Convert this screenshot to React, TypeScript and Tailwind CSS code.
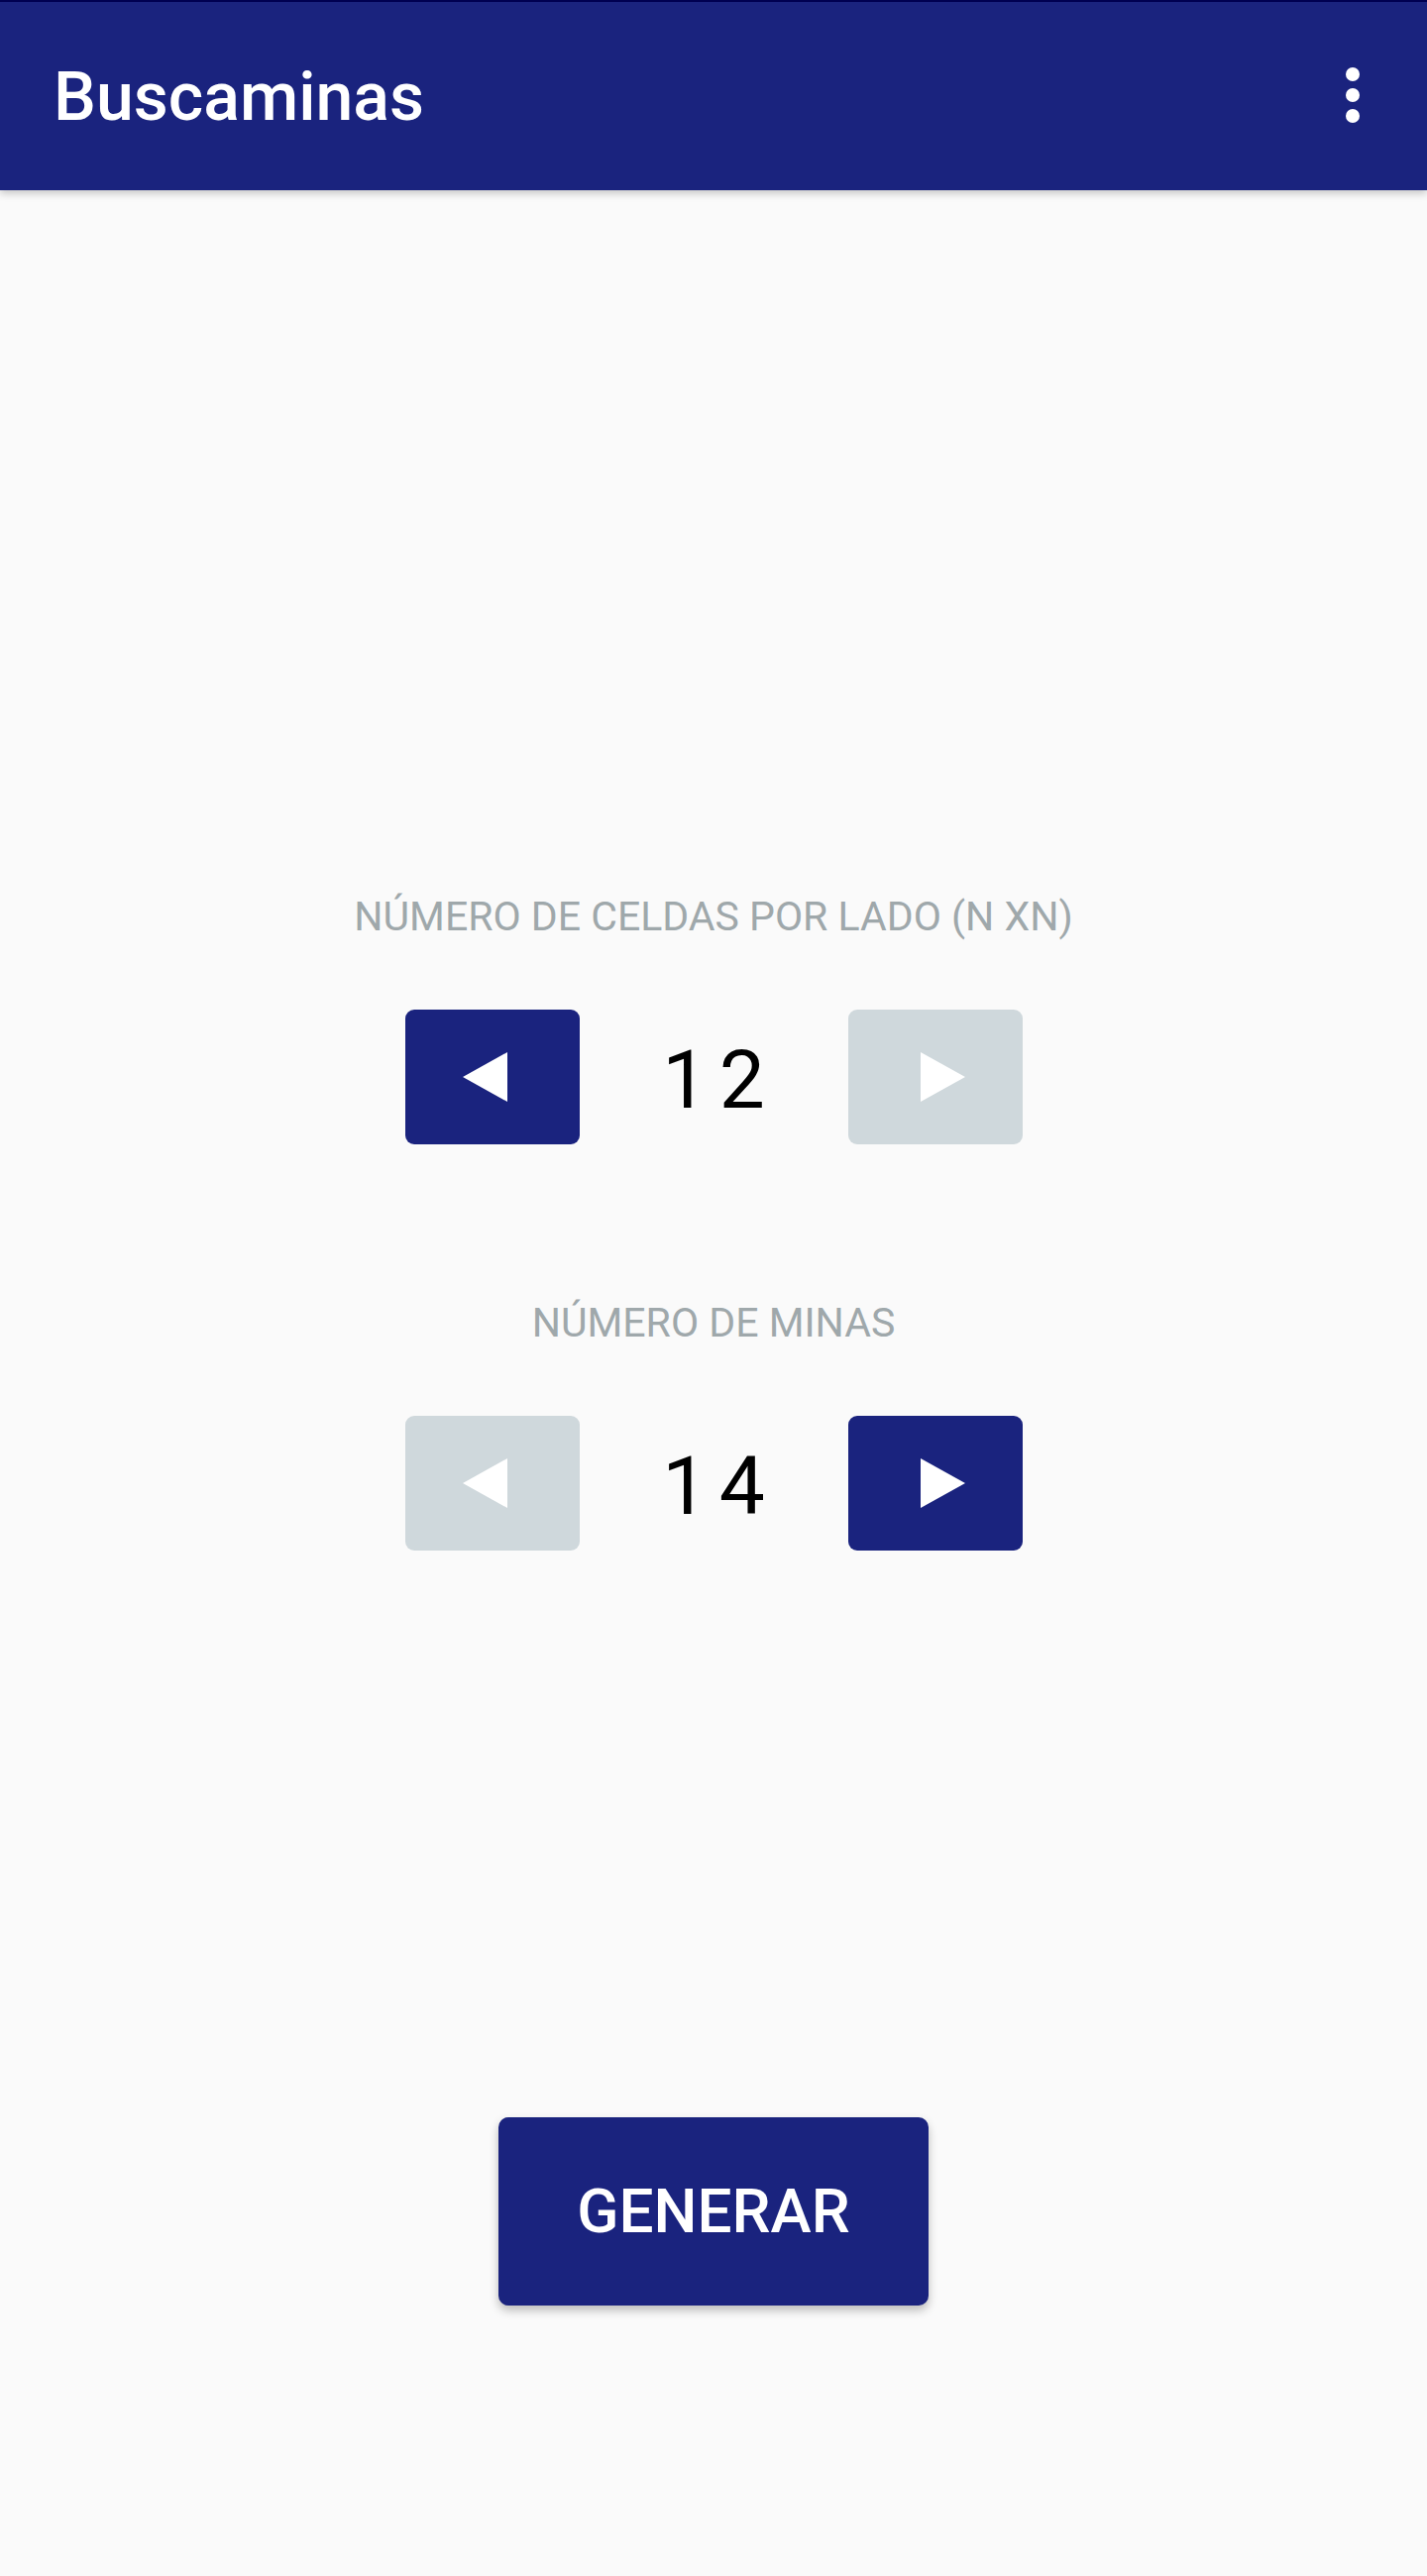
import React from "react";

function Arrow({ dir }: { dir: "left" | "right" }) {
  return (
    <svg width="45" height="50" viewBox="0 0 45 50" className={dir === "left" ? "mr-[15px]" : "ml-[15px]"}>
      {dir === "left" ? (
        <polygon points="45,0 0,25 45,50" fill="#ffffff" />
      ) : (
        <polygon points="0,0 45,25 0,50" fill="#ffffff" />
      )}
    </svg>
  );
}

function Stepper({ value, leftEnabled, rightEnabled }: { value: string; leftEnabled: boolean; rightEnabled: boolean }) {
  return (
    <div className="flex flex-row items-center justify-center">
      <div
        className={
          "w-[176px] h-[136px] rounded-[9px] flex items-center justify-center " +
          (leftEnabled ? "bg-[#1a237e]" : "bg-[#cfd8dc]")
        }
      >
        <Arrow dir="left" />
      </div>
      <div className="w-[271px] flex items-center justify-center pt-[5px]">
        <span className="text-[82px] leading-[82px] tracking-[0.14em] pl-[0.14em] text-black">{value}</span>
      </div>
      <div
        className={
          "w-[176px] h-[136px] rounded-[9px] flex items-center justify-center " +
          (rightEnabled ? "bg-[#1a237e]" : "bg-[#cfd8dc]")
        }
      >
        <Arrow dir="right" />
      </div>
    </div>
  );
}

export default function App() {
  return (
    <div
      className="w-[1440px] h-[2600px] bg-[#fafafa] flex flex-col"
      style={{ fontFamily: "Roboto, 'Noto Sans', sans-serif" }}
    >
      <div className="relative z-10 shadow-[0_3px_8px_rgba(0,0,0,0.22)]">
        <div className="h-[2px] bg-[#000051]" />
        <div className="h-[190px] bg-[#1a237e] flex flex-row items-center justify-between pl-[54px] pr-[68px]">
          <span className="text-white text-[68px] font-medium leading-[82px] pt-[1px]">Buscaminas</span>
          <div className="flex flex-col items-center gap-[7px] pb-[2px]">
            <div className="w-[14px] h-[14px] rounded-full bg-white" />
            <div className="w-[14px] h-[14px] rounded-full bg-white" />
            <div className="w-[14px] h-[14px] rounded-full bg-white" />
          </div>
        </div>
      </div>

      <div className="flex flex-col items-center mt-[709px]">
        <div className="text-[41px] leading-[48px] text-[#9fa8ab] text-center">
          NÚMERO DE CELDAS POR LADO (N XN)
        </div>
        <div className="mt-[70px]">
          <Stepper value="12" leftEnabled={true} rightEnabled={false} />
        </div>
        <div className="mt-[156px] text-[41px] leading-[48px] text-[#9fa8ab] text-center">NÚMERO DE MINAS</div>
        <div className="mt-[70px]">
          <Stepper value="14" leftEnabled={false} rightEnabled={true} />
        </div>
        <button className="mt-[572px] w-[434px] h-[190px] rounded-[10px] bg-[#1a237e] text-white text-[62px] font-medium leading-none shadow-[0_5px_10px_rgba(0,0,0,0.25)] flex items-center justify-center">
          GENERAR
        </button>
      </div>
    </div>
  );
}
